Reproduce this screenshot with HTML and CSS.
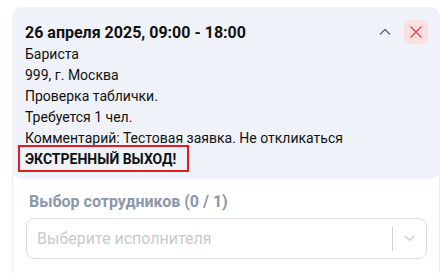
FILE: index.html
```html
<!DOCTYPE html>
<html lang="ru">
<head>
<meta charset="utf-8">
<link rel="stylesheet" href="styles.css">
</head>
<body>
<div class="panel">
  <div class="card">
    <div class="card-head">
      <div class="title">26 апреля 2025, 09:00 - 18:00</div>
      <div class="actions">
        <button class="toggle" aria-label="Свернуть">
          <svg width="12" height="8" viewBox="0 0 12 8"><path d="M1 6.5 L6 1.5 L11 6.5" fill="none" stroke="#5b6475" stroke-width="1.3"/></svg>
        </button>
        <button class="close" aria-label="Закрыть">
          <svg width="14" height="14" viewBox="0 0 14 14"><path d="M1.5 1.5 L12.5 12.5 M12.5 1.5 L1.5 12.5" fill="none" stroke="#e5484d" stroke-width="1.4"/></svg>
        </button>
      </div>
    </div>
    <div class="lines">
      <div>Бариста</div>
      <div>999, г. Москва</div>
      <div>Проверка таблички.</div>
      <div>Требуется 1 чел.</div>
      <div>Комментарий: Тестовая заявка. Не откликаться</div>
    </div>
    <div class="alert">ЭКСТРЕННЫЙ ВЫХОД!</div>
  </div>
  <div class="section">
    <div class="label">Выбор сотрудников (0 / 1)</div>
    <div class="select">
      <span class="placeholder">Выберите исполнителя</span>
      <span class="sep"></span>
      <svg class="caret" width="11" height="7" viewBox="0 0 11 7"><path d="M1 1 L5.5 5.5 L10 1" fill="none" stroke="#c4c8cf" stroke-width="1.1"/></svg>
    </div>
  </div>
</div>
</body>
</html>
```
FILE: styles.css
```css
* { box-sizing: border-box; }
html, body { margin: 0; padding: 0; background: #fff; }
body { font-family: Roboto, "Noto Sans", sans-serif; color: #111; }

.panel {
  margin: 7px 0 0 12px;
  width: 428px;
  height: 266px;
  border-left: 1px solid #eceef2;
  border-right: 1px solid #eceef2;
  border-radius: 10px 10px 0 0;
}

.card {
  margin-left: -1px;
  margin-right: -1px;
  background: #eff3f9;
  border-radius: 10px;
  padding: 13px 12px 7px 13px;
}

.card-head {
  display: flex;
  align-items: center;
  justify-content: space-between;
  height: 24px;
}

.title {
  font-size: 16px;
  font-weight: 700;
}

.actions { display: flex; align-items: center; gap: 12px; }

.toggle, .close {
  border: 0;
  padding: 0;
  display: flex;
  align-items: center;
  justify-content: center;
  cursor: pointer;
}
.toggle { background: transparent; width: 14px; height: 24px; }
.close { background: #fde1e2; width: 24px; height: 24px; border-radius: 6px; }

.lines { font-size: 14px; line-height: 21px; }

.alert {
  display: inline-block;
  margin: -7px 0 0 -7px;
  border: 2px solid #e11d1d;
  padding: 3px 11px 2px 5px;
  font-size: 14px;
  line-height: 18px;
  font-weight: 700;
}

.section { padding: 13px 12px 0 13px; }

.label {
  font-size: 16px;
  font-weight: 700;
  color: #8b97ab;
  padding-left: 3px;
  line-height: 20px;
}

.select {
  margin-top: 6px;
  height: 41px;
  border: 1px solid #dcdde0;
  border-radius: 8px;
  display: flex;
  align-items: center;
  padding: 0 11px 0 10px;
}
.placeholder { flex: 1; font-size: 16px; color: #c9c9cc; }
.sep { width: 1px; height: 24px; background: #cfd1d5; margin-right: 11px; }
.caret { display: block; }
```
